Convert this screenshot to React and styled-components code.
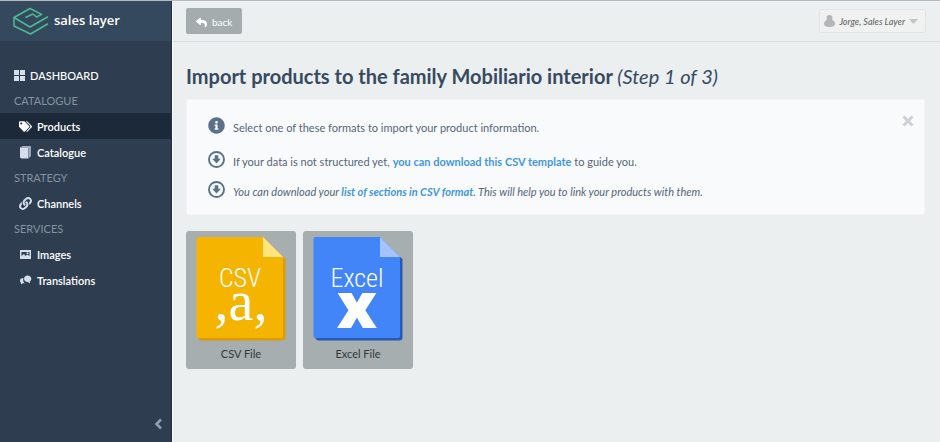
import React, { useState } from "react";
import styled, { createGlobalStyle, css } from "styled-components";
import { FaReply, FaTags, FaLink, FaInfoCircle } from "react-icons/fa";

const GlobalStyle = createGlobalStyle`
  * {
    box-sizing: border-box;
  }

  body {
    margin: 0;
    background: #ebeff0;
    color: #56667a;
    font-family: Lato, "Liberation Sans", sans-serif;
    font-size: 11px;
  }
`;

const Page = styled.div`
  display: flex;
  min-height: 100vh;
  border-top: 1px solid #b4babd;
`;

const Sidebar = styled.aside`
  display: flex;
  flex-direction: column;
  flex: 0 0 172px;
  background: #2e3e50;
  border-right: 1px solid #243344;
`;

const Brand = styled.a`
  display: flex;
  align-items: center;
  gap: 5px;
  height: 40px;
  padding-left: 13px;
  background: #35495e;
  color: #fff;
  font-family: "Open Sans", "Noto Sans", sans-serif;
  font-size: 13px;
  font-weight: 600;
  line-height: 18px;
  text-decoration: none;

  span {
    padding-bottom: 2px;
  }
`;

const Nav = styled.nav`
  display: flex;
  flex-direction: column;
  flex: 1;
  padding-top: 21px;
`;

const NavTitle = styled.h2`
  margin: 0;
  padding-left: 14px;
  color: #8492a2;
  font-size: 11px;
  font-weight: 400;
  line-height: 25px;
`;

const NavLink = styled.a`
  display: flex;
  align-items: center;
  gap: ${(props) => (props.$top ? "4px" : "5px")};
  height: 26px;
  padding-left: ${(props) => (props.$top ? "13px" : "19px")};
  color: #fff;
  font-size: 11px;
  font-weight: ${(props) => (props.$top ? 500 : 600)};
  text-decoration: none;

  ${(props) =>
    props.$active &&
    css`
      background: #1c2939;
    `}

  svg {
    width: 13px;
    height: 13px;
    color: ${(props) => (props.$active ? "#fff" : "#d5dfec")};
  }
`;

const CollapseButton = styled.button`
  display: flex;
  align-self: flex-end;
  margin-bottom: 8px;
  padding: 4px 8px;
  border: 0;
  background: none;
  color: #8fa0b3;
  cursor: pointer;
`;

const Content = styled.div`
  flex: 1;
  min-width: 0;
  border-left: 1px solid #f7f9fa;
`;

const TopBar = styled.header`
  display: flex;
  align-items: center;
  justify-content: space-between;
  height: 41px;
  padding: 0 14px 0 13px;
  border-bottom: 1px solid #d8dddf;
`;

const BackButton = styled.button`
  display: flex;
  align-items: center;
  justify-content: center;
  gap: 5px;
  height: 26px;
  padding: 2px 10px 0;
  border: 0;
  border-radius: 2px;
  background: #a5acae;
  color: #fff;
  font-family: inherit;
  font-size: 10px;
  cursor: pointer;

  svg {
    width: 11px;
    height: 11px;
  }
`;

const UserMenu = styled.button`
  display: flex;
  align-items: center;
  gap: 4px;
  height: 24px;
  padding: 0 7px 0 4px;
  border: 1px solid #e2e4e5;
  border-radius: 2px;
  background: #f0f1f1;
  color: #6b6b6b;
  font-family: inherit;
  font-size: 9px;
  font-style: italic;
  font-weight: 500;
  cursor: pointer;
`;

const Main = styled.main`
  padding: 19px 15px 20px 13px;
`;

const Title = styled.h1`
  margin: 0 0 8px;
  color: #374a60;
  font-size: 20px;
  font-weight: 700;
  line-height: 30px;

  em {
    font-weight: 400;
  }
`;

const Notice = styled.section`
  display: flex;
  align-items: flex-start;
  justify-content: space-between;
  padding: 13px 8px 13px 21px;
  border: 1px solid #f2f5f7;
  border-radius: 2px;
  background: #f8fafc;
`;

const NoticeList = styled.ul`
  display: flex;
  flex-direction: column;
  gap: 6px;
  margin: 0;
  padding: 0;
  list-style: none;
`;

const NoticeItem = styled.li`
  display: flex;
  align-items: center;
  gap: 8px;
  min-height: 24px;
  font-style: ${(props) => (props.$italic ? "italic" : "normal")};

  &:first-child {
    margin-bottom: 4px;
  }

  svg {
    flex: none;
    width: 17px;
    height: 17px;
    color: #5a7189;
  }

  span {
    padding-top: 4px;
  }

  a {
    color: #4398dc;
    font-weight: 700;
    text-decoration: none;
  }
`;

const CloseButton = styled.button`
  display: flex;
  padding: 2px;
  border: 0;
  background: none;
  color: #cdd1d5;
  cursor: pointer;
`;

const Formats = styled.div`
  display: flex;
  flex-wrap: wrap;
  gap: 7px;
  margin-top: 16px;
`;

const FormatButton = styled.button`
  display: flex;
  flex-direction: column;
  align-items: center;
  gap: 5px;
  width: 110px;
  padding: 6px 0 7px;
  border: 0;
  border-radius: 3px;
  background: #a6aeb0;
  color: #33383b;
  font-family: inherit;
  font-size: 11px;
  line-height: 16px;
  cursor: pointer;
`;

const Logo = () => (
  <svg
    width="36"
    height="28"
    viewBox="0 0 36 28"
    fill="none"
    stroke="#4dba91"
    strokeWidth="1.5"
    strokeLinejoin="round"
    strokeLinecap="round"
    aria-hidden="true"
  >
    <path d="M13 10.300 20 7l3.500 3 5.200-2.700L17 1.500 1 10.500 17 20l17.500-10" />
    <path d="M1 10.500V19l16.500 8 17-10" />
  </svg>
);

const GridIcon = () => (
  <svg viewBox="0 0 13 13" fill="currentColor" aria-hidden="true">
    <path d="M1 1h5v5H1zM7 1h5v5H7zM1 7h5v5H1zM7 7h5v5H7z" />
  </svg>
);

const BookIcon = () => (
  <svg viewBox="0 0 13 13" aria-hidden="true">
    <path d="M3 0h9v10l-2 2V2H3z" fill="#9dabbb" />
    <path d="M1 1.500 2.500.500V2H9.500v10.500H2.500L1 11.500z" fill="currentColor" />
  </svg>
);

const PictureIcon = () => (
  <svg viewBox="0 0 13 13" aria-hidden="true">
    <path d="M1 2h11v9H1z" fill="currentColor" />
    <path d="M2.500 8V4h8v4L8 6.500 6.500 8 5 6z" fill="#2e3e50" />
    <circle cx="8.500" cy="5.200" r="1" fill="currentColor" />
  </svg>
);

const ChatIcon = () => (
  <svg viewBox="0 0 13 13" fill="currentColor" aria-hidden="true">
    <path d="M4.500 4C2.300 4 1 5.100 1 6.700c0 1 .4 1.600 1.100 2L2 10.500l1.900-1.300h1.800C4.300 8.200 3.700 6 4.500 4z" />
    <path d="M8.700 1.500C6.500 1.500 5 2.800 5 4.700S6.500 8 8.700 8l2.400 1.300-.3-1.900c1-.6 1.500-1.500 1.500-2.700 0-1.900-1.500-3.200-3.600-3.200z" />
  </svg>
);

const DownloadIcon = () => (
  <svg viewBox="0 0 17 17" aria-hidden="true">
    <circle
      cx="8.500"
      cy="8.500"
      r="7.500"
      fill="none"
      stroke="currentColor"
      strokeWidth="1.900"
    />
    <path d="M6.700 4.200h3.600v3.600h2.500l-4.300 4.700-4.300-4.700h2.500z" fill="currentColor" />
  </svg>
);

const UserIcon = () => (
  <svg width="11" height="12" viewBox="0 0 11 12" fill="#b3b6b8" aria-hidden="true">
    <circle cx="5.500" cy="3" r="3" />
    <path d="M3 5h5c2 .5 3 2 3 4 0 2-2 3-5.500 3S0 11 0 9c0-2 1-3.500 3-4z" />
  </svg>
);

const CaretIcon = () => (
  <svg width="9" height="5" viewBox="0 0 9 5" fill="#c3c6c8" aria-hidden="true">
    <path d="M0 0h9L4.500 5z" />
  </svg>
);

const ChevronIcon = () => (
  <svg
    width="9"
    height="12"
    viewBox="0 0 9 12"
    fill="none"
    stroke="currentColor"
    strokeWidth="2.500"
    aria-hidden="true"
  >
    <path d="M7 1.500 2.500 6 7 10.500" />
  </svg>
);

const CloseIcon = () => (
  <svg
    width="12"
    height="12"
    viewBox="0 0 12 12"
    stroke="currentColor"
    strokeWidth="3"
    aria-hidden="true"
  >
    <path d="M1.500 1.500l9 9M10.500 1.500l-9 9" />
  </svg>
);

const FileIcon = ({ color, shade, fold, children }) => (
  <svg width="90" height="104" viewBox="0 0 90 104" aria-hidden="true">
    <path
      d="M2 99l85-79 2.500 2v78.500a3 3 0 0 1-3 3H5.500a4 4 0 0 1-3-2z"
      fill={shade}
    />
    <path
      d="M2.500 0H67l20 20v79a2 2 0 0 1-2 2H2.500a2 2 0 0 1-2-2V2a2 2 0 0 1 2-2z"
      fill={color}
    />
    <path d="M67 0l20 20H67z" fill={fold} />
    {children}
  </svg>
);

const FormatName = styled.text`
  fill: #fff;
  font-family: "Roboto Condensed", "Liberation Sans Narrow", Roboto, sans-serif;
  font-size: 26px;
  font-weight: 300;
  text-anchor: middle;
`;

const FormatMark = styled.text`
  fill: #fff;
  font-family: ${(props) =>
    props.$heavy ? '"Open Sans", "Noto Sans", sans-serif' : '"Liberation Serif", serif'};
  font-size: ${(props) => (props.$heavy ? "64px" : "56px")};
  font-weight: ${(props) => (props.$heavy ? 800 : 400)};
  text-anchor: middle;
`;

const noticeIcons = {
  info: FaInfoCircle,
  download: DownloadIcon,
};

const NoticeRow = ({ icon, italic, children }) => {
  const Icon = noticeIcons[icon];
  return (
    <NoticeItem $italic={italic}>
      <Icon />
      <span>{children}</span>
    </NoticeItem>
  );
};

export default function App() {
  const [showNotice, setShowNotice] = useState(true);

  return (
    <>
      <GlobalStyle />
      <Page>
        <Sidebar>
          <Brand href="#home">
            <Logo />
            <span>sales layer</span>
          </Brand>
          <Nav>
            <NavLink href="#dashboard" $top>
              <GridIcon />
              DASHBOARD
            </NavLink>
            <NavTitle>CATALOGUE</NavTitle>
            <NavLink href="#products" $active>
              <FaTags />
              Products
            </NavLink>
            <NavLink href="#catalogue">
              <BookIcon />
              Catalogue
            </NavLink>
            <NavTitle>STRATEGY</NavTitle>
            <NavLink href="#channels">
              <FaLink />
              Channels
            </NavLink>
            <NavTitle>SERVICES</NavTitle>
            <NavLink href="#images">
              <PictureIcon />
              Images
            </NavLink>
            <NavLink href="#translations">
              <ChatIcon />
              Translations
            </NavLink>
          </Nav>
          <CollapseButton aria-label="Collapse menu">
            <ChevronIcon />
          </CollapseButton>
        </Sidebar>

        <Content>
          <TopBar>
            <BackButton>
              <FaReply />
              back
            </BackButton>
            <UserMenu>
              <UserIcon />
              Jorge, Sales Layer
              <CaretIcon />
            </UserMenu>
          </TopBar>

          <Main>
            <Title>
              Import products to the family Mobiliario interior <em>(Step 1 of 3)</em>
            </Title>

            {showNotice && (
              <Notice>
                <NoticeList>
                  <NoticeRow icon="info">
                    Select one of these formats to import your product information.
                  </NoticeRow>
                  <NoticeRow icon="download">
                    If your data is not structured yet,{" "}
                    <a href="#template">you can download this CSV template</a> to guide you.
                  </NoticeRow>
                  <NoticeRow icon="download" italic>
                    You can download your{" "}
                    <a href="#sections">list of sections in CSV format</a>. This will help
                    you to link your products with them.
                  </NoticeRow>
                </NoticeList>
                <CloseButton aria-label="Close" onClick={() => setShowNotice(false)}>
                  <CloseIcon />
                </CloseButton>
              </Notice>
            )}

            <Formats>
              <FormatButton>
                <FileIcon color="#f5b400" shade="#dd9c05" fold="#ffe57c">
                  <FormatName x="44" y="50">CSV</FormatName>
                  <FormatMark x="45" y="83">,a,</FormatMark>
                </FileIcon>
                CSV File
              </FormatButton>
              <FormatButton>
                <FileIcon color="#4285f8" shade="#2459b5" fold="#a3c4fc">
                  <FormatName x="44" y="50">Excel</FormatName>
                  <FormatMark x="44" y="91" $heavy>x</FormatMark>
                </FileIcon>
                Excel File
              </FormatButton>
            </Formats>
          </Main>
        </Content>
      </Page>
    </>
  );
}
